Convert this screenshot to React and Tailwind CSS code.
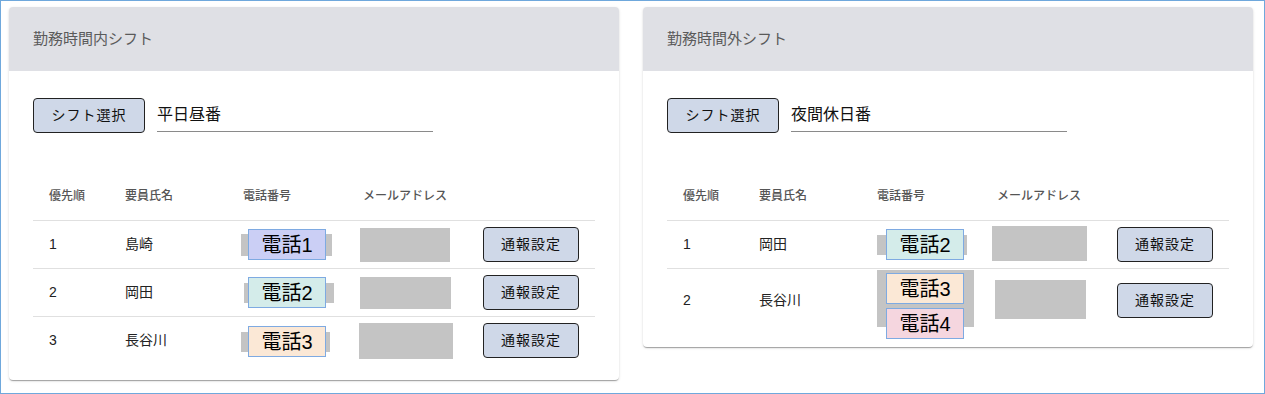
import React from "react";

const FONT = { fontFamily: '"Liberation Sans", "Noto Sans CJK JP", sans-serif' };

const LABEL_BG = {
  1: "bg-[#cbcff5]",
  2: "bg-[#d4ecea]",
  3: "bg-[#fbe8d6]",
  4: "bg-[#f5d6df]",
};

function PhoneLabel({ n }) {
  return (
    <div
      className={`flex h-[31px] w-[78px] shrink-0 items-center justify-center border border-[#7eaae2] text-[20px] leading-none text-[#000] ${LABEL_BG[n]}`}
    >
      電話{n}
    </div>
  );
}

function ActionButton({ children, className = "" }) {
  return (
    <button
      className={`flex h-[35px] items-center justify-center rounded-[4px] border border-[#222] bg-[#cfd8e8] text-[14px] tracking-[1px] text-[#111] ${className}`}
    >
      {children}
    </button>
  );
}

const COLS = "grid grid-cols-[76px_118px_120px_120px_128px]";

function Row({ r }) {
  return (
    <div className={`${COLS} items-center border-t border-[#e0e0e0] ${r.h}`}>
      <div className="pl-4 text-[14px] text-[#222]">{r.no}</div>
      <div className="pl-4 text-[14px] text-[#222]">{r.name}</div>
      <div className="flex items-center">
        {r.phones.length === 1 ? (
          <div className={`flex items-center bg-[#c4c4c4] ${r.gray}`}>
            <PhoneLabel n={r.phones[0]} />
          </div>
        ) : (
          <div className={`flex flex-col gap-[4px] bg-[#c4c4c4] pt-[3px] ${r.gray}`}>
            {r.phones.map((p) => (
              <PhoneLabel key={p} n={p} />
            ))}
          </div>
        )}
      </div>
      <div className="flex items-center">
        <div className={`bg-[#c4c4c4] ${r.mail}`} />
      </div>
      <div className="pl-4">
        <ActionButton className="w-[96px]">通報設定</ActionButton>
      </div>
    </div>
  );
}

function Card({ title, shift, rows, pb }) {
  return (
    <div className={`w-[610px] overflow-hidden rounded-[4px] bg-white shadow-[0_2px_1px_-1px_rgba(0,0,0,0.2),0_1px_1px_0_rgba(0,0,0,0.14),0_1px_3px_0_rgba(0,0,0,0.12)] ${pb}`}>
      <div className="flex h-[64px] items-center bg-[#dfe0e5] px-6 text-[15px] text-[#5a5a5a]">
        {title}
      </div>
      <div className="px-6 pt-[27px]">
        <div className="flex items-start gap-3">
          <ActionButton className="w-[112px]">シフト選択</ActionButton>
          <div className="flex h-[34px] w-[276px] items-center border-b border-[#8a8a8a] text-[16px] text-[#111]">
            {shift}
          </div>
        </div>
        <div className="mt-[39px]">
          <div className={`${COLS} h-[48px] items-center text-[12px] font-medium text-[#555]`}>
            <div className="pl-4">優先順</div>
            <div className="pl-4">要員氏名</div>
            <div className="pl-4">電話番号</div>
            <div className="pl-4">メールアドレス</div>
            <div />
          </div>
          {rows.map((r, i) => (
            <Row key={i} r={r} />
          ))}
        </div>
      </div>
    </div>
  );
}

const leftRows = [
  {
    no: "1",
    name: "島崎",
    h: "h-[48px]",
    phones: [1],
    gray: "ml-[14px] h-[22px] w-[91px] pl-[7px]",
    mail: "ml-[13px] h-[34px] w-[90px]",
  },
  {
    no: "2",
    name: "岡田",
    h: "h-[48px]",
    phones: [2],
    gray: "ml-[17px] h-[20px] w-[90px] pl-[4px]",
    mail: "ml-[13px] h-[32px] w-[91px] mt-[1px]",
  },
  {
    no: "3",
    name: "長谷川",
    h: "h-[48px]",
    phones: [3],
    gray: "ml-[14px] h-[20px] w-[89px] pl-[7px] mt-[2px]",
    mail: "ml-[12px] h-[36px] w-[94px] mt-[1px]",
  },
];

const rightRows = [
  {
    no: "1",
    name: "岡田",
    h: "h-[48px]",
    phones: [2],
    gray: "ml-[16px] h-[20px] w-[90px] pl-[9px]",
    mail: "ml-[11px] h-[35px] w-[95px] -mt-[3px]",
  },
  {
    no: "2",
    name: "長谷川",
    h: "h-[64px]",
    phones: [3, 4],
    gray: "ml-[16px] h-[57px] w-[97px] pl-[9px] -mt-[4px]",
    mail: "ml-[14px] h-[39px] w-[91px] -mt-[3px]",
  },
];

export default function App() {
  return (
    <div
      style={FONT}
      className="flex h-[394px] w-[1265px] items-start gap-6 border border-[#6fa8dc] bg-white pl-2 pt-[6px]"
    >
      <Card title="勤務時間内シフト" shift="平日昼番" rows={leftRows} pb="pb-[16px]" />
      <Card title="勤務時間外シフト" shift="夜間休日番" rows={rightRows} pb="pb-[15px]" />
    </div>
  );
}
